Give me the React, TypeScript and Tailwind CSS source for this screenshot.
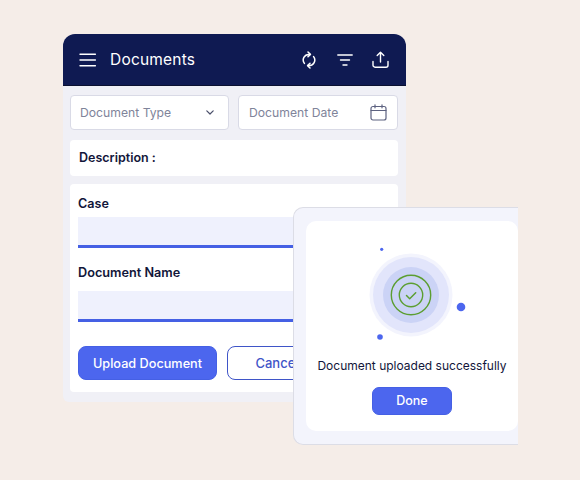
import React from 'react';

const MenuIcon = () => (
  <svg width="18" height="14" viewBox="0 0 18 14" fill="none" stroke="white" strokeWidth="1.4" strokeLinecap="round">
    <path d="M1 1.2h15.4M1 7h15.4M1 12.8h15.4" />
  </svg>
);

const SyncIcon = () => (
  <svg width="14" height="18" viewBox="0 0 14 18" fill="none" stroke="white" strokeWidth="1.5" strokeLinecap="round" strokeLinejoin="round">
    <path d="M2.4 12.4A5.6 5.6 0 0 1 7 3.4h1" />
    <path d="M6 1l2.4 2.4L6 5.8" />
    <path d="M11.6 5.6A5.6 5.6 0 0 1 7 14.6H6" />
    <path d="M8 12.2l-2.4 2.4L8 17" />
  </svg>
);

const FilterIcon = () => (
  <svg width="16" height="12" viewBox="0 0 16 12" fill="none" stroke="white" strokeWidth="1.4" strokeLinecap="round">
    <path d="M0.8 1h14.4M3.5 6h9M6 11h4" />
  </svg>
);

const UploadIcon = () => (
  <svg width="17" height="17" viewBox="0 0 17 17" fill="none" stroke="white" strokeWidth="1.4" strokeLinecap="round" strokeLinejoin="round">
    <path d="M8.5 11V1.2M5.2 4.5l3.3-3.3 3.3 3.3" />
    <path d="M1 10.5v3.7a2 2 0 0 0 2 2h11a2 2 0 0 0 2-2v-3.7" />
  </svg>
);

const ChevronIcon = () => (
  <svg width="8" height="5" viewBox="0 0 8 5" fill="none" stroke="#4a4f6a" strokeWidth="1.2" strokeLinecap="round" strokeLinejoin="round">
    <path d="M0.8 0.8L4 4l3.2-3.2" />
  </svg>
);

const CalendarIcon = () => (
  <svg width="17" height="17" viewBox="0 0 17 17" fill="none" stroke="#5d6280" strokeWidth="1.2" strokeLinecap="round">
    <rect x="1" y="2.5" width="15" height="13.5" rx="2" />
    <path d="M1 6.5h15M5 0.8v3M12 0.8v3" />
  </svg>
);

// circles + green check in the popup, plus the little floating dots
const SuccessGraphic = () => (
  <svg width="100" height="100" viewBox="0 0 100 100" fill="none" className="overflow-visible">
    <circle cx="44" cy="46" r="41.5" fill="#f3f4fd" />
    <circle cx="44" cy="46" r="38" fill="#e2e5fb" />
    <circle cx="44" cy="46" r="28" fill="#cbd3f6" />
    <circle cx="44" cy="46" r="19.7" stroke="#5c9e31" strokeWidth="1.4" />
    <circle cx="44" cy="46" r="11.7" stroke="#5c9e31" strokeWidth="1.4" />
    <path d="M39.5 46.5l3.2 3.2 6-6" stroke="#5c9e31" strokeWidth="1.5" strokeLinecap="round" strokeLinejoin="round" />
    <circle cx="14.7" cy="0.3" r="1.6" fill="#4c66ee" />
    <circle cx="94" cy="58" r="4.3" fill="#4c66ee" />
    <circle cx="13" cy="88" r="2.8" fill="#4c66ee" />
  </svg>
);

export default function App() {
  return (
    <div className="relative w-[580px] h-[480px] overflow-hidden bg-[#f5ede8] pl-[63px] pt-[34px] font-['Inter',sans-serif]">
      <div className="w-[343px] h-[368px] rounded-t-[12px] rounded-b-[6px] bg-[#f0f0f6]">
        {/* Header */}
        <div className="flex items-center h-[52px] pl-[16px] pr-[17px] rounded-t-[12px] bg-[#0f1a52] border-b border-[#0a1030]">
          <MenuIcon />
          <span className="ml-[13px] text-[15.5px] text-white tracking-[0.2px]">Documents</span>
          <div className="ml-auto flex items-center">
            <SyncIcon />
            <div className="ml-[21px]"><FilterIcon /></div>
            <div className="ml-[19px]"><UploadIcon /></div>
          </div>
        </div>

        <div className="px-[7px] pt-[9px]">
          {/* Filters */}
          <div className="flex gap-[9px] w-[328px]">
            <div className="w-[159px] h-[35px] flex items-center justify-between pl-[9px] pr-[14px] bg-white border border-[#d9dae6] rounded-[4px] text-[12.2px] text-[#80849a]">
              <span className="pt-[2px]">Document Type</span>
              <ChevronIcon />
            </div>
            <div className="w-[160px] h-[35px] flex items-center justify-between pl-[10px] pr-[10px] bg-white border border-[#d9dae6] rounded-[4px] text-[12.2px] text-[#80849a]">
              <span className="pt-[2px]">Document Date</span>
              <CalendarIcon />
            </div>
          </div>

          <div className="w-[328px] h-[36px] mt-[10px] flex items-center pl-[9px] bg-white rounded-[4px] text-[12.5px] font-semibold text-[#12163a]">
            Description :
          </div>

          {/* Form */}
          <div className="w-[328px] h-[208px] mt-[8px] px-[8px] bg-white rounded-[4px]">
            <div className="pt-[12px] h-[19px] box-content text-[12.6px] leading-[15px] font-semibold text-[#12163a]">Case</div>
            <div className="h-[31px] mt-[2px] bg-[#eff1fd] border-b-[3px] border-[#4560e4]" />
            <div className="mt-[16px] h-[19px] text-[12.7px] leading-[17px] font-semibold text-[#12163a]">Document Name</div>
            <div className="h-[31px] mt-[8px] bg-[#eff1fd] border-b-[3px] border-[#4560e4]" />
            <div className="flex gap-[10px] mt-[24px]">
              <button className="w-[139px] h-[34px] pt-[1px] rounded-[8px] bg-[#4c66ee] border border-[#4560e4] text-[12.7px] font-medium text-white">Upload Document</button>
              <button className="w-[100px] h-[34px] pt-[1px] rounded-[8px] bg-white border-[1.5px] border-[#3f55c8] text-[13px] font-medium text-[#3f55c8]">Cancel</button>
            </div>
          </div>
        </div>
      </div>

      {/* Success popup */}
      <div className="absolute left-[293px] top-[207px] w-[225px] h-[238px] pl-[12px] pt-[13px] rounded-l-[10px] bg-[#f3f4fc] border-l border-t border-b border-[#dcdde6]">
        <div className="w-[212px] h-[210px] flex flex-col items-center rounded-[10px] bg-white">
          <div className="h-[128px] w-full relative">
            <div className="absolute left-[61px] top-[28px]">
              <SuccessGraphic />
            </div>
          </div>
          <div className="mt-[9px] text-[12px] leading-[16px] text-[#12163a] whitespace-nowrap">Document uploaded successfully</div>
          <button className="mt-[13px] w-[80px] h-[28px] rounded-[7px] bg-[#4c66ee] border border-[#4560e4] text-[12.5px] font-medium text-white">Done</button>
        </div>
      </div>
    </div>
  );
}
